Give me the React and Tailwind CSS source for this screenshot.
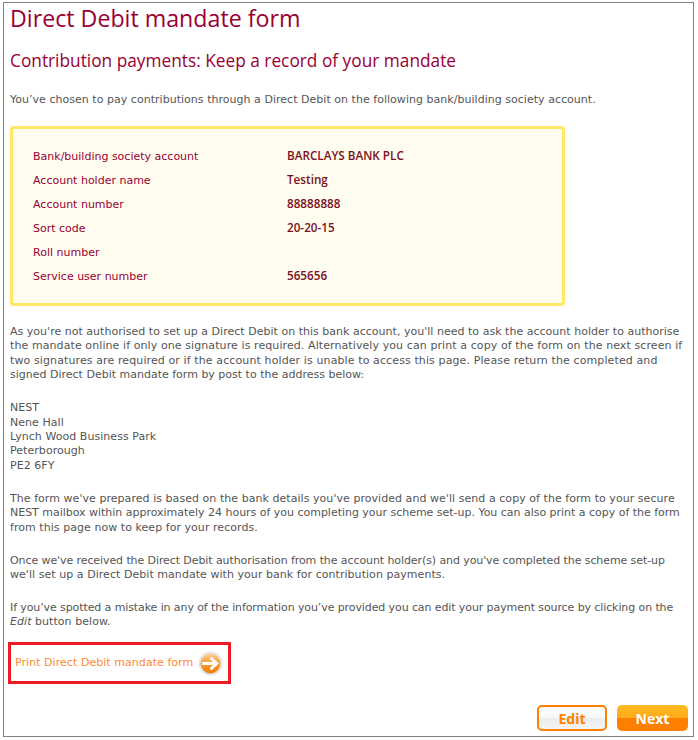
const body = "font-['DejaVu_Sans',sans-serif] text-[11px] leading-[14.4px] text-[#555]";

const rows = [
  ["Bank/building society account", "BARCLAYS BANK PLC"],
  ["Account holder name", "Testing"],
  ["Account number", "88888888"],
  ["Sort code", "20-20-15"],
  ["Roll number", ""],
  ["Service user number", "565656"],
];

// each line carries its own tracking so the rag follows the original
function Line({ className = "tracking-[0.05px]", children }) {
  return <div className={`whitespace-nowrap ${className}`}>{children}</div>;
}

function ArrowIcon() {
  return (
    <svg width="25" height="25" viewBox="0 0 24 24">
      <defs>
        <linearGradient id="arrowFill" x1="0" y1="0" x2="0" y2="1">
          <stop offset="0" stopColor="#fcd09a" />
          <stop offset="0.5" stopColor="#fb9a2c" />
          <stop offset="1" stopColor="#f27f0c" />
        </linearGradient>
      </defs>
      <circle cx="12" cy="12" r="11.5" fill="#e6e6e6" />
      <circle cx="12" cy="12" r="9.5" fill="url(#arrowFill)" />
      <path d="M4 12h13M12 6.500l6 5.500-6 5.500" fill="none" stroke="#fff" strokeWidth="2.800" />
    </svg>
  );
}

export default function App() {
  return (
    <div className="w-[698px] h-[740px] bg-white pt-[2px] pl-[3px]">
      <div className="w-[691px] h-[735px] border border-[#808080] pl-[6px] flex flex-col">
        <h1 className="shrink-0 font-['Open_Sans',sans-serif] text-[23.2px] leading-[30px] text-[#990033]">
          Direct Debit mandate form
        </h1>
        <h2 className="shrink-0 font-['Open_Sans',sans-serif] text-[17.3px] leading-[22px] mt-[17px] text-[#990033]">
          Contribution payments: Keep a record of your mandate
        </h2>
        <div className={`${body} mt-[20.6px] shrink-0`}>
          <Line className="tracking-[0.03px]">You’ve chosen to pay contributions through a Direct Debit on the following bank/building society account.</Line>
        </div>
        <div className="shrink-0 mt-[19px] w-[555px] h-[180px] border-[3px] border-[#ffe866] rounded-[4px] bg-[#fffdf0] pt-[16px] pl-[20px]">
          {rows.map(([label, value]) => (
            <div key={label} className="flex h-[24px] items-center font-['DejaVu_Sans',sans-serif] text-[11px]">
              <span className="w-[254px] text-[#990033]">{label}</span>
              <span className="font-['Open_Sans',sans-serif] text-[11.7px] mb-[2px] text-[#7a1020] font-semibold">{value}</span>
            </div>
          ))}
        </div>
        <div className={`${body} mt-[19px] shrink-0`}>
          <Line className="tracking-[0.02px]">As you're not authorised to set up a Direct Debit on this bank account, you'll need to ask the account holder to authorise</Line>
          <Line className="tracking-[0.09px]">the mandate online if only one signature is required. Alternatively you can print a copy of the form on the next screen if</Line>
          <Line className="tracking-[0.11px]">two signatures are required or if the account holder is unable to access this page. Please return the completed and</Line>
          <Line className="tracking-[0px]">signed Direct Debit mandate form by post to the address below:</Line>
        </div>
        <div className={`${body} mt-[18.6px] shrink-0`}>
          <Line>NEST</Line>
          <Line>Nene Hall</Line>
          <Line>Lynch Wood Business Park</Line>
          <Line>Peterborough</Line>
          <Line>PE2 6FY</Line>
        </div>
        <div className={`${body} mt-[18.6px] shrink-0`}>
          <Line>The form we've prepared is based on the bank details you've provided and we'll send a copy of the form to your secure</Line>
          <Line className="tracking-[-0.02px]">NEST mailbox within approximately 24 hours of you completing your scheme set-up. You can also print a copy of the form</Line>
          <Line>from this page now to keep for your records.</Line>
        </div>
        <div className={`${body} mt-[18.6px] shrink-0`}>
          <Line className="tracking-[-0.09px]">Once we've received the Direct Debit authorisation from the account holder(s) and you've completed the scheme set-up</Line>
          <Line>we'll set up a Direct Debit mandate with your bank for contribution payments.</Line>
        </div>
        <div className={`${body} mt-[18.6px] shrink-0`}>
          <Line className="tracking-[-0.1px]">If you’ve spotted a mistake in any of the information you’ve provided you can edit your payment source by clicking on the</Line>
          <Line><em>Edit</em> button below.</Line>
        </div>
        <div className="shrink-0 mt-[12.5px] -ml-[2px] w-[223px] h-[42px] border-[3px] border-[#ed1c24] flex items-center pl-[4px]">
          <span className="font-['DejaVu_Sans',sans-serif] text-[11px] tracking-[0.05px] text-[#ff8a33] whitespace-nowrap">
            Print Direct Debit mandate form
          </span>
          <span className="ml-[5px] flex"><ArrowIcon /></span>
        </div>
        <div className="shrink-0 flex justify-end gap-[10px] mt-[21px] pr-[5px] font-['Open_Sans',sans-serif] text-[14px] font-bold">
          <button className="w-[70px] h-[26px] rounded-[5px] border-2 border-[#ff8000] text-[#ff8000] bg-[linear-gradient(#ffffff_0%,#f6f6f6_50%,#ececec_50%,#f4f4f4_100%)]">
            Edit
          </button>
          <button className="w-[71px] h-[26px] rounded-[5px] text-white bg-[linear-gradient(#ffbb22_0%,#ffaa18_50%,#ff8000_50%,#ff8000_100%)]">
            Next
          </button>
        </div>
      </div>
    </div>
  );
}
